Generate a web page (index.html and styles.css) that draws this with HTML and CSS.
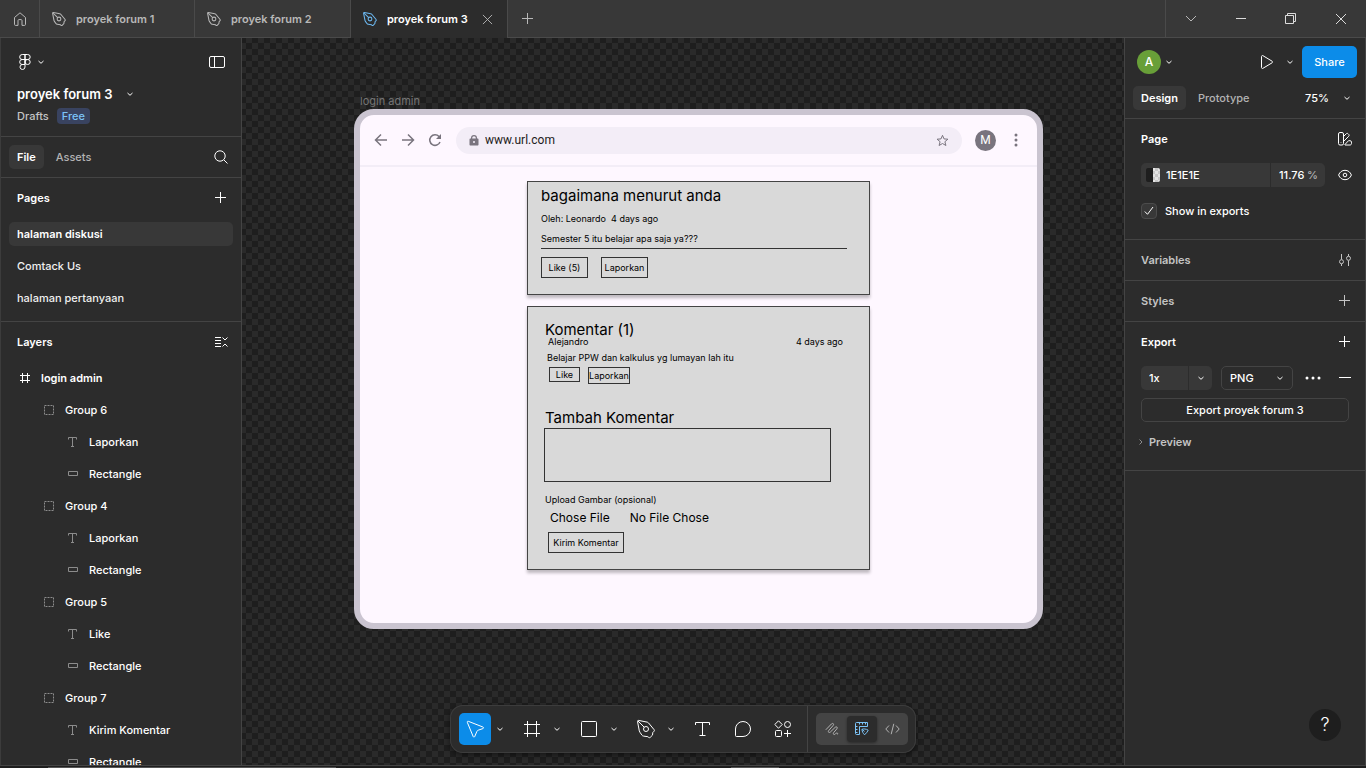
FILE: index.html
```html
<!DOCTYPE html>
<html lang="id">
<head>
<meta charset="utf-8">
<meta name="viewport" content="width=device-width, initial-scale=1">
<title>proyek forum 3</title>
<link rel="stylesheet" href="styles.css">
</head>
<body>
<svg class="sprite" aria-hidden="true">
  <symbol id="pen" viewBox="0 0 24 24"><path d="M3.500 4.400c-.1-.6.4-1.100 1-1l8.600 1.700c.6.100 1.100.400 1.500.900l5.500 6.700c.400.500.400 1.100 0 1.500l-1.300 1.300-.300 2.600-2.300 2.300c-.400.400-1 .400-1.500 0l-.8-.7-4.300-.6c-.7-.1-1.300-.4-1.700-1l-2-2.900c-.3-.4-.5-.8-.6-1.300z"/><path d="M4 4l6.200 6.200"/><circle cx="12" cy="12" r="2.500"/></symbol>
  <symbol id="chev" viewBox="0 0 8 8"><path d="M1.500 3l2.500 2.300L6.500 3"/></symbol>
  <symbol id="plus" viewBox="0 0 12 12"><path d="M5.500 0v11M0 5.500h11"/></symbol>
  <symbol id="cross" viewBox="0 0 12 12"><path d="M1 1l10 10M11 1L1 11"/></symbol>
  <symbol id="hash" viewBox="0 0 16 16"><path d="M3.500 0v16M12.500 0v16M0 3.500h16M0 12.500h16"/></symbol>
  <symbol id="hash-small" viewBox="0 0 10 10"><path d="M2.500 0v10M7.500 0v10M0 2.500h10M0 7.500h10"/></symbol>
  <symbol id="group" viewBox="0 0 10 10"><path stroke-dasharray="2 1" d="M.5.5h9v9h-9z"/></symbol>
  <symbol id="tee" viewBox="0 0 10 10"><path d="M.5 2.500v-2h8v2M4.500.5v9M3 9.500h3"/></symbol>
  <symbol id="rect" viewBox="0 0 10 6"><path d="M.5.5h9v4h-9z"/></symbol>
</svg>
<div class="app">
  <header class="titlebar">
    <button class="home" aria-label="Home"><svg width="14" height="14" viewBox="0 0 14 14"><path d="M1.500 5.500L7 .8l5.500 4.700v7c0 .5-.4.900-.9.900H9V8.500C9 8 8.600 7.600 8.100 7.600H5.900C5.400 7.600 5 8 5 8.500v4.900H2.400c-.5 0-.9-.4-.9-.9z"/></svg></button>
    <button class="tab"><svg width="18" height="18"><use href="#pen"/></svg>proyek forum 1</button>
    <button class="tab"><svg width="18" height="18"><use href="#pen"/></svg>proyek forum 2</button>
    <div class="tab current"><svg width="18" height="18"><use href="#pen"/></svg>proyek forum 3<button class="close" aria-label="Close tab"><svg width="11" height="11" viewBox="0 0 12 12"><use href="#cross"/></svg></button></div>
    <button class="new" aria-label="New tab"><svg width="11" height="11" viewBox="0 0 11 11"><path d="M5.500 0v11M0 5.500h11"/></svg></button>
    <div class="window-controls">
      <button aria-label="Menu"><svg width="12" height="8" viewBox="0 0 12 8"><path d="M1 1l5 5 5-5"/></svg></button>
      <button class="lit" aria-label="Minimize"><svg width="10" height="2" viewBox="0 0 10 2"><path d="M0 .5h10"/></svg></button>
      <button class="lit" aria-label="Restore"><svg width="12" height="12" viewBox="0 0 12 12"><path d="M.5 2.500h8v8h-8zM2.500 2.500v-2h8v8h-2"/></svg></button>
      <button class="lit" aria-label="Close"><svg width="12" height="12"><use href="#cross"/></svg></button>
    </div>
  </header>

  <main class="workspace">
    <aside class="panel left">
      <section class="file-head">
        <div class="bar">
          <button class="logo" aria-label="Main menu"><svg width="12" height="16" viewBox="0 0 12 16"><path d="M6 .5H3.200a2.500 2.500 0 000 5H6zm0 0h2.700a2.500 2.500 0 010 5H6zm0 5H3.200a2.500 2.500 0 000 5H6zm0 0v5m0-2.500a2.600 2.500 0 115.200 0A2.600 2.500 0 016 8zm0 2.500H3.200a2.500 2.500 0 102.800 2.500z"/></svg><svg width="8" height="8"><use href="#chev"/></svg></button>
          <button aria-label="Collapse panel"><svg width="16" height="14" viewBox="0 0 16 14"><rect x=".5" y="1.500" width="15" height="11" rx="1.500"/><path d="M5.500 1.500v11"/></svg></button>
        </div>
        <h1><button>proyek forum 3 <svg width="8" height="8"><use href="#chev"/></svg></button></h1>
        <p class="location"><a href="#drafts">Drafts</a><span class="plan">Free</span></p>
      </section>
      <nav class="switch">
        <button class="pill on">File</button><button class="pill">Assets</button>
        <button class="end" aria-label="Search"><svg width="14" height="14" viewBox="0 0 14 14"><circle cx="6" cy="6" r="5.200"/><path d="M9.800 9.800l3.700 3.700"/></svg></button>
      </nav>
      <section class="pages">
        <h2>Pages <button class="end" aria-label="Add page"><svg width="12" height="12"><use href="#plus"/></svg></button></h2>
        <a class="page on" href="#diskusi"><span>halaman diskusi</span></a>
        <a class="page" href="#contact"><span>Comtack Us</span></a>
        <a class="page" href="#pertanyaan"><span>halaman pertanyaan</span></a>
      </section>
      <section class="layers">
        <h2>Layers <button class="end" aria-label="Collapse layers"><svg width="13" height="12" viewBox="0 0 13 12"><path d="M0 1.500h6M0 4.500h6M0 7.500h6M0 10.500h6M7.500 1.500L10 4l2.500-2.500M7.500 10.500L10 8l2.500 2.500"/></svg></button></h2>
        <ul>
          <li class="root"><i><svg width="10" height="10"><use href="#hash-small"/></svg></i>login admin</li>
          <li class="l1"><i><svg width="10" height="10"><use href="#group"/></svg></i>Group 6</li>
          <li class="l2"><i><svg width="10" height="10"><use href="#tee"/></svg></i>Laporkan</li>
          <li class="l2"><i><svg width="10" height="6"><use href="#rect"/></svg></i>Rectangle</li>
          <li class="l1"><i><svg width="10" height="10"><use href="#group"/></svg></i>Group 4</li>
          <li class="l2"><i><svg width="10" height="10"><use href="#tee"/></svg></i>Laporkan</li>
          <li class="l2"><i><svg width="10" height="6"><use href="#rect"/></svg></i>Rectangle</li>
          <li class="l1"><i><svg width="10" height="10"><use href="#group"/></svg></i>Group 5</li>
          <li class="l2"><i><svg width="10" height="10"><use href="#tee"/></svg></i>Like</li>
          <li class="l2"><i><svg width="10" height="6"><use href="#rect"/></svg></i>Rectangle</li>
          <li class="l1"><i><svg width="10" height="10"><use href="#group"/></svg></i>Group 7</li>
          <li class="l2"><i><svg width="10" height="10"><use href="#tee"/></svg></i>Kirim Komentar</li>
          <li class="l2"><i><svg width="10" height="6"><use href="#rect"/></svg></i>Rectangle</li>
        </ul>
      </section>
    </aside>

    <div class="canvas">
      <div class="frame">
        <div class="frame-name">login admin</div>
        <div class="board">
          <div class="browser-bar">
            <button aria-label="Back"><svg width="14" height="14" viewBox="0 0 14 14"><path d="M13 7H2M7 1.500L1.500 7 7 12.500"/></svg></button>
            <button aria-label="Forward"><svg width="14" height="14" viewBox="0 0 14 14"><path d="M1 7h11M7 1.500L12.500 7 7 12.500"/></svg></button>
            <button aria-label="Reload"><svg width="14" height="14" viewBox="0 0 14 14"><path d="M12 9a5.300 5.300 0 11-1-5.500l1.200 1.500"/><path class="solid" d="M13 1v5H8z"/></svg></button>
            <div class="address">
              <svg width="10" height="13" viewBox="0 0 10 13"><path class="solid" fill-rule="evenodd" d="M1.500 4.500H2V4a3 3 0 016 0v.5h.5c.6 0 1 .4 1 1v5c0 .6-.4 1-1 1h-7c-.6 0-1-.4-1-1v-5c0-.6.4-1 1-1zm1.700 0h3.600V4a1.800 1.800 0 00-3.600 0zM5 7a1 1 0 100 2 1 1 0 000-2z"/></svg>
              <input type="text" aria-label="Address" value="www.url.com">
              <svg width="13" height="13" viewBox="0 0 13 13"><path class="thin" d="M6.500 1.300l1.500 3.600 3.900.3-3 2.500 1 3.800-3.400-2-3.400 2 1-3.800-3-2.500 3.900-.3z"/></svg>
            </div>
            <span class="face">M</span>
            <button aria-label="More"><svg width="4" height="14" viewBox="0 0 4 14"><g class="solid"><circle cx="2" cy="2" r="1.500"/><circle cx="2" cy="7" r="1.500"/><circle cx="2" cy="12" r="1.500"/></g></svg></button>
          </div>
          <div class="cards">
            <article class="card post">
              <h3>bagaimana menurut anda</h3>
              <p class="meta">Oleh: Leonardo &nbsp;4 days ago</p>
              <p class="question">Semester 5 itu belajar apa saja ya???</p>
              <div class="actions"><button>Like (5)</button><button>Laporkan</button></div>
            </article>
            <article class="card comments">
              <h3>Komentar (1)</h3>
              <div class="byline"><span>Alejandro</span><span>4 days ago</span></div>
              <p class="body">Belajar PPW dan kalkulus yg lumayan lah itu</p>
              <div class="actions small"><button>Like</button><button>Laporkan</button></div>
              <h3 class="add"><label for="komentar">Tambah Komentar</label></h3>
              <textarea id="komentar"></textarea>
              <p class="upload">Upload Gambar (opsional)</p>
              <div class="picker"><button>Chose File</button><span>No File Chose</span></div>
              <button class="send">Kirim Komentar</button>
            </article>
          </div>
        </div>
      </div>

      <div class="toolbar">
        <div class="tool"><button class="on" aria-label="Move"><svg width="24" height="24" viewBox="0 0 24 24"><path d="M4.300 5.300c-.3-.7.400-1.300 1-1l14.600 5.700c.8.300.8 1.300 0 1.600l-4.700 1.600c-.6.200-1 .6-1.300 1.200l-2.200 5.200c-.3.700-1.200.7-1.500 0z"/></svg></button><button class="more" aria-label="Move options"><svg width="8" height="8"><use href="#chev"/></svg></button></div>
        <div class="tool"><button aria-label="Frame"><svg width="16" height="16"><use href="#hash"/></svg></button><button class="more" aria-label="Frame options"><svg width="8" height="8"><use href="#chev"/></svg></button></div>
        <div class="tool"><button aria-label="Rectangle"><svg width="16" height="16" viewBox="0 0 16 16"><rect x=".5" y=".5" width="15" height="15" rx="1"/></svg></button><button class="more" aria-label="Shape options"><svg width="8" height="8"><use href="#chev"/></svg></button></div>
        <div class="tool"><button aria-label="Pen"><svg width="24" height="24"><use href="#pen"/></svg></button><button class="more" aria-label="Pen options"><svg width="8" height="8"><use href="#chev"/></svg></button></div>
        <div class="tool"><button aria-label="Text"><svg width="16" height="16" viewBox="0 0 16 16"><path d="M.5 4V1.500h14V4M7.500 1.500v13M4.500 14.500h6"/></svg></button></div>
        <div class="tool"><button aria-label="Comment"><svg width="16" height="16" viewBox="0 0 16 16"><path d="M8 .5a7.500 7.500 0 010 15H1.500a1 1 0 01-1-1V8A7.500 7.500 0 018 .5z"/></svg></button></div>
        <div class="tool"><button aria-label="Actions"><svg width="18" height="18" viewBox="0 0 18 18"><path d="M4.500.8l3.700 3.700-3.700 3.700L.8 4.500z"/><circle cx="13.500" cy="4.500" r="3"/><rect x="1.500" y="10.500" width="6" height="6" rx="1"/><path d="M13.500 10v7M10 13.500h7"/></svg></button></div>
        <div class="modes">
          <button aria-label="Draw"><svg width="14" height="14" viewBox="0 0 14 14"><path d="M.8 7.800L6.500 1.900c1.300-1.200 2.800.1 1.700 1.500L3.700 8.600c-1.100 1.400.4 2.600 1.700 1.400l4.800-4.700c1.300-1.200 2.800.1 1.700 1.500L8.600 10.700c-.9 1.300.4 2.500 1.700 1.400l.9-.9c.9-.8 1.900.1 1.300 1.200"/></svg></button>
          <button class="on" aria-label="Design"><svg width="14" height="14" viewBox="0 0 14 14"><path d="M1.500.5h11v4h-8v8h-3c-.6 0-1-.4-1-1v-10c0-.6.4-1 1-1zM4.500 2.500V.5M7.500 2.500V.5M10.500 2.500V.5M2.500 4.500h-2M2.500 7.500h-2M2.500 10.500h-2M6.900 7.300c1.500-.6 4.300-.5 6.300.9l-1.200 2-2.400 2.600c-1.500-1.200-2.500-3.500-2.700-5.500zM7 7.400l2.500 2"/></svg></button>
          <button aria-label="Dev"><svg width="15" height="12" viewBox="0 0 15 12"><path d="M4 2.500L.8 6 4 9.500M11 2.500L14.200 6 11 9.500M8.800.8L6.200 11.200"/></svg></button>
        </div>
      </div>
    </div>

    <aside class="panel right">
      <section class="people">
        <div class="bar">
          <button class="account" aria-label="Account"><span class="avatar">A</span><svg width="8" height="8"><use href="#chev"/></svg></button>
          <button class="play" aria-label="Present"><svg width="14" height="14" viewBox="0 0 14 14"><path d="M1.500 1.400c0-.7.700-1.100 1.300-.8l9.300 5.600c.6.400.6 1.200 0 1.600l-9.300 5.600c-.6.300-1.300-.1-1.300-.8z"/></svg></button>
          <button aria-label="Present options"><svg width="8" height="8"><use href="#chev"/></svg></button>
          <button class="share">Share</button>
        </div>
        <div class="modes-row"><button class="pill on">Design</button><button class="pill">Prototype</button><button class="zoom">75% <svg width="8" height="8"><use href="#chev"/></svg></button></div>
      </section>
      <section class="page-props">
        <h2>Page <button class="end" aria-label="Styles"><svg width="14" height="14" viewBox="0 0 14 14"><rect x=".5" y=".5" width="5" height="12.500" rx="1.500"/><path d="M3 10.200v.6M6 4l2.200-2.200c.6-.6 1.300-.6 1.900 0l.6.600c.6.600.6 1.300 0 1.900L6 9M7 13h5c.8 0 1.500-.6 1.500-1.400v-1.500c0-.8-.6-1.400-1.400-1.400h-1.600L6.500 13"/></svg></button></h2>
        <div class="row fill">
          <div class="field"><span class="swatch"></span><input type="text" aria-label="Page colour" value="1E1E1E"></div>
          <div class="field opacity"><input type="text" aria-label="Opacity" value="11.76"><span>%</span></div>
          <button class="end" aria-label="Visibility"><svg width="14" height="12" viewBox="0 0 14 12"><path d="M.6 6C1.800 3 4 1.300 7 1.300S12.200 3 13.400 6C12.200 9 10 10.700 7 10.700S1.800 9 .6 6z"/><circle cx="7" cy="6" r="1.800"/></svg></button>
        </div>
        <label class="check"><span class="tick"><input type="checkbox" checked><svg width="10" height="10" viewBox="0 0 10 10"><path d="M.8 5.500l2.700 2.800L9 1"/></svg></span>Show in exports</label>
      </section>
      <section class="flat"><h2>Variables <button class="end" aria-label="Variables"><svg width="12" height="12" viewBox="0 0 12 12"><path d="M2.500 0v5.500M2.500 9.800V12M9.500 0v2.200M9.500 6.500V12"/><circle cx="2.500" cy="7.700" r="2"/><circle cx="9.500" cy="4.300" r="2"/></svg></button></h2></section>
      <section class="flat"><h2>Styles <button class="end" aria-label="Add style"><svg width="12" height="12"><use href="#plus"/></svg></button></h2></section>
      <section class="export">
        <h2>Export <button class="end" aria-label="Add export"><svg width="12" height="12"><use href="#plus"/></svg></button></h2>
        <div class="row">
          <div class="field scale"><input type="text" aria-label="Scale" value="1x"><button aria-label="Scale options"><svg width="8" height="8"><use href="#chev"/></svg></button></div>
          <div class="format"><select aria-label="Format"><option>PNG</option><option>JPG</option></select><svg width="8" height="8"><use href="#chev"/></svg></div>
          <button class="dots" aria-label="More"><svg width="16" height="4" viewBox="0 0 16 4"><g class="solid"><circle cx="2" cy="2" r="1.500"/><circle cx="8" cy="2" r="1.500"/><circle cx="14" cy="2" r="1.500"/></g></svg></button>
          <button class="end" aria-label="Remove"><svg width="12" height="2" viewBox="0 0 12 2"><path d="M0 .5h12"/></svg></button>
        </div>
        <div class="row"><button class="export-btn">Export proyek forum 3</button></div>
        <button class="preview"><svg width="6" height="8" viewBox="0 0 6 8"><path d="M1.500 1.500L4 4 1.500 6.500"/></svg>Preview</button>
      </section>
      <button class="help">?</button>
    </aside>
  </main>
  <footer class="scroll"><span class="thumb edge"></span><span class="thumb middle"></span></footer>
</div>
</body>
</html>
```
FILE: styles.css
```css
* { box-sizing: border-box; }
body {
  margin: 0;
  background: #1e1e1e;
  color: #fff;
  font: 500 11px/16px Inter, "Liberation Sans", sans-serif;
}
h1, h2, h3, p, ul { margin: 0; padding: 0; }
ul { list-style: none; }
button, input, select, textarea {
  font: inherit;
  color: inherit;
  background: none;
  border: 0;
  padding: 0;
  margin: 0;
  outline: 0;
}
button { display: flex; align-items: center; justify-content: center; }
a { color: inherit; text-decoration: none; }
svg { fill: none; stroke: currentColor; flex: none; display: block; }
.solid { fill: currentColor; stroke: none; }
.sprite { position: absolute; width: 0; height: 0; }

.app { height: 100vh; display: flex; flex-direction: column; overflow: hidden; }

/* Title bar */
.titlebar {
  flex: none;
  display: flex;
  height: 38px;
  background: #383838;
  border-bottom: 1px solid #4a4a4a;
  color: #b8b8b8;
}
.home { width: 40px; border-right: 1px solid #4a4a4a; }
.tab {
  display: flex;
  align-items: center;
  justify-content: flex-start;
  gap: 8px;
  width: 156px;
  padding-left: 10px;
  border-right: 1px solid #4a4a4a;
  font-weight: 600;
}
.tab > svg { stroke-width: 1.4; }
.home + .tab { width: 155px; }
.tab.current { width: 157px; background: #2c2c2c; color: #fff; margin-bottom: -1px; }
.tab.current > svg { color: #6cb8f0; }
.close { width: 24px; height: 24px; color: #b8b8b8; }
.new { width: 38px; }
.window-controls { display: flex; margin-left: auto; border-left: 1px solid #4a4a4a; }
.window-controls button { width: 50px; }
.window-controls .lit { color: #dcdcdc; }

/* Side panels */
.workspace { flex: 1; min-height: 0; display: flex; }
.panel { flex: none; background: #2c2c2c; overflow: hidden; }
.left { width: 242px; border-left: 1px solid #3c3c3c; border-right: 1px solid #444; }
.right {
  position: relative;
  width: 242px;
  border-left: 1px solid #444;
  border-right: 1px solid #444;
}
.panel section, .switch { border-bottom: 1px solid #444; }
.panel h2 {
  display: flex;
  align-items: center;
  height: 40px;
  padding: 0 8px 0 16px;
  font-size: 11px;
  font-weight: 600;
}
.end { width: 24px; height: 24px; margin-left: auto; }
.pill { height: 24px; padding: 0 8px; border-radius: 5px; color: #b3b3b3; }
.pill.on { background: #383838; color: #fff; font-weight: 600; }
.bar { display: flex; align-items: center; }

.file-head { padding: 8px 16px 12px; }
.file-head .bar { justify-content: space-between; height: 32px; }
.logo { gap: 6px; padding-left: 2px; }
.file-head h1 { font-size: 13px; font-weight: 600; line-height: 16px; margin-top: 8px; }
.file-head h1 button { gap: 14px; }
.location { display: flex; gap: 8px; margin-top: 6px; color: #c4c4c4; }
.plan { padding: 0 5px; border-radius: 4px; background: #394360; color: #7cc4f8; }
.switch { display: flex; align-items: center; gap: 4px; height: 41px; padding: 0 8px; }
.pages { padding-bottom: 7px; }
.page { display: flex; align-items: center; height: 32px; padding: 0 8px; color: #f0f0f0; }
.page span { flex: 1; padding: 4px 8px; border-radius: 5px; }
.page.on span { background: #383838; color: #fff; font-weight: 600; }
.panel .layers { border-bottom: 0; }
.layers li { display: flex; align-items: center; gap: 8px; height: 32px; color: #fff; }
.layers i { display: flex; justify-content: center; width: 16px; color: #8c8c8c; }
.layers .root { padding-left: 16px; font-weight: 600; }
.layers .root i { color: #fff; }
.layers .l1 { padding-left: 40px; }
.layers .l2 { padding-left: 64px; }

.people { padding: 8px 8px 8px 12px; }
.people .bar { height: 32px; }
.account { gap: 4px; margin-right: auto; }
.avatar {
  width: 24px;
  height: 24px;
  border-radius: 50%;
  background: #689f38;
  font-size: 12px;
  line-height: 24px;
}
.play { margin-right: 12px; }
.share { width: 55px; height: 32px; margin-left: 8px; border-radius: 5px; background: #0c8ce9; }
.modes-row { display: flex; align-items: center; gap: 4px; height: 32px; margin: 4px 0 -4px -4px; }
.zoom { gap: 14px; margin: 0 6px 0 auto; }
.row { display: flex; align-items: center; height: 32px; padding: 0 8px 0 16px; }
.row input { width: 100%; min-width: 0; }
.field { display: flex; align-items: center; height: 24px; background: #383838; border-radius: 5px; }
.page-props { padding-bottom: 8px; }
.fill .field { flex: 1; gap: 6px; padding-left: 5px; border-radius: 5px 0 0 5px; }
.fill .opacity {
  flex: 0 0 54px;
  gap: 2px;
  margin-left: 1px;
  padding: 0 7px 0 8px;
  border-radius: 0 5px 5px 0;
}
.opacity span { color: #b3b3b3; }
.fill .end { margin-left: 8px; }
.swatch {
  flex: none;
  width: 14px;
  height: 14px;
  border-radius: 2px;
  background:
    linear-gradient(90deg, #1e1e1e 50%, transparent 50%),
    repeating-conic-gradient(#c8c8c8 0 25%, #e4e4e4 0 50%) 0 0 / 6px 6px;
}
.check { display: flex; align-items: center; gap: 8px; height: 40px; padding-left: 16px; }
.tick { display: grid; place-items: center; }
.tick > * { grid-area: 1 / 1; }
.tick input {
  appearance: none;
  width: 16px;
  height: 16px;
  background: #383838;
  border: 1px solid #4c4c4c;
  border-radius: 4px;
}
.flat { color: #c4c4c4; }
.export { padding-bottom: 12px; }
.scale { width: 71px; margin-right: 9px; }
.scale input { flex: 1; padding-left: 8px; }
.scale button { width: 24px; height: 24px; border-left: 1px solid #2c2c2c; }
.format { display: grid; align-items: center; width: 72px; }
.format > * { grid-area: 1 / 1; }
.format select {
  appearance: none;
  height: 24px;
  padding-left: 8px;
  border: 1px solid #444;
  border-radius: 5px;
}
.format svg { justify-self: end; margin-right: 9px; pointer-events: none; }
.dots { margin-left: 12px; }
.export-btn { flex: 1; height: 24px; margin-right: 8px; border: 1px solid #444; border-radius: 5px; }
.preview { gap: 5px; height: 32px; padding-left: 13px; color: #c4c4c4; font-weight: 600; }
.preview svg { color: #8c8c8c; }
.help {
  position: absolute;
  right: 24px;
  bottom: 24px;
  width: 32px;
  height: 32px;
  border-radius: 50%;
  background: #1e1e1e;
  font-size: 18px;
  font-weight: 300;
}

/* Canvas */
.canvas {
  position: relative;
  flex: 1;
  min-width: 0;
  overflow: hidden;
  background: repeating-conic-gradient(#2a2a2a 0 25%, #1e1e1e 0 50%) 4px 5px / 12px 12px;
}
.frame {
  position: absolute;
  left: 112px;
  top: 55px;
  width: 689px;
}
.frame-name { padding-left: 6px; color: #757575; font-weight: 400; }
.board {
  border: 6px solid #cac4d0;
  border-radius: 20px;
  background: #fef7ff;
  color: #000;
}
.browser-bar {
  display: flex;
  align-items: center;
  gap: 13px;
  height: 52px;
  padding: 0 14px;
  border-bottom: 2px solid #f3edf7;
  color: #79747e;
}
.browser-bar svg { stroke-width: 1.5; }
.browser-bar .thin { stroke-width: 1; }
.address {
  flex: 1;
  display: flex;
  align-items: center;
  gap: 6px;
  height: 27px;
  margin-left: 1px;
  padding: 0 13px;
  border-radius: 14px;
  background: #f3edf7;
}
.address input { flex: 1; min-width: 0; color: #1d1b20; font: 400 12px/16px Roboto, sans-serif; }
.face {
  width: 21px;
  height: 21px;
  border-radius: 50%;
  background: #79747e;
  color: #fff;
  font: 400 12px/21px Roboto, sans-serif;
  text-align: center;
}
.browser-bar .face + button { width: 14px; }
.cards {
  display: flex;
  flex-direction: column;
  align-items: center;
  gap: 11px;
  padding: 14px 0 53px;
}
.card {
  width: 343px;
  border: 1px solid #444;
  background: #d9d9d9;
  box-shadow: 0 3px 3px rgba(0, 0, 0, .25);
  font-size: 9px;
  font-weight: 400;
  line-height: 12px;
}
.card h3 { font-size: 15px; font-weight: 400; line-height: 18px; }
.card button { color: #000; }
.post { padding: 5px 22px 16px 13px; }
.meta, .question { margin-top: 8px; }
.question { padding-bottom: 3px; border-bottom: 1px solid #333; }
.actions { display: flex; align-items: flex-start; gap: 13px; margin-top: 8px; }
.actions button { width: 47px; height: 21px; border: 1px solid #333; }
.comments { padding: 15px 26px 16px 17px; }
.comments h3 { line-height: 15px; }
.byline { display: flex; justify-content: space-between; padding-left: 3px; line-height: 10px; }
.body { margin-top: 5px; padding-left: 2px; }
.small { gap: 8px; margin: 3px 0 0 4px; }
.small button { width: 42px; height: 17px; }
.small button:first-child { width: 31px; height: 15px; }
.comments .add { margin-top: 25px; line-height: 17px; }
.comments textarea {
  display: block;
  width: 287px;
  height: 54px;
  margin: 2px 0 0 -1px;
  border: 1px solid #333;
  resize: none;
}
.upload { margin-top: 12px; }
.picker {
  display: flex;
  gap: 20px;
  margin-top: 4px;
  padding-left: 5px;
  font-size: 12px;
  line-height: 16px;
}
.send { width: 76px; height: 21px; margin: 6px 0 0 3px; border: 1px solid #333; }

/* Floating toolbar */
.toolbar {
  position: absolute;
  bottom: 12px;
  left: 50%;
  transform: translateX(-50%);
  display: flex;
  gap: 8px;
  padding: 8px 8px 8px 9px;
  border-radius: 13px;
  background: #2c2c2c;
  box-shadow: inset 0 0 0 1px #3c3c3c, 0 2px 6px rgba(0, 0, 0, .5);
}
.tool { display: flex; }
.tool button { width: 32px; height: 32px; border-radius: 5px; }
.tool .on { background: #0c8ce9; }
.tool .more { width: 17px; }
.modes {
  position: relative;
  display: flex;
  align-items: center;
  margin-left: 9px;
  padding: 0 1px;
  border-radius: 5px;
  background: #444;
  color: #b3b3b3;
}
.modes::before {
  content: "";
  position: absolute;
  left: -9px;
  top: -7px;
  bottom: -7px;
  border-left: 1px solid #444;
}
.modes button { width: 30px; height: 26px; border-radius: 4px; }
.modes .on { background: #2c2c2c; color: #7cc4f8; box-shadow: 0 1px 3px rgba(0, 0, 0, .4); }

/* Horizontal scrollbar strip */
.scroll {
  flex: none;
  display: flex;
  height: 3px;
  padding-top: 1px;
  border-top: 1px solid #444;
  background: #1e1e1e;
}
.thumb { background: #555; }
.edge { width: 288px; margin-left: 48px; }
.middle { width: 48px; margin-left: 395px; }
```
